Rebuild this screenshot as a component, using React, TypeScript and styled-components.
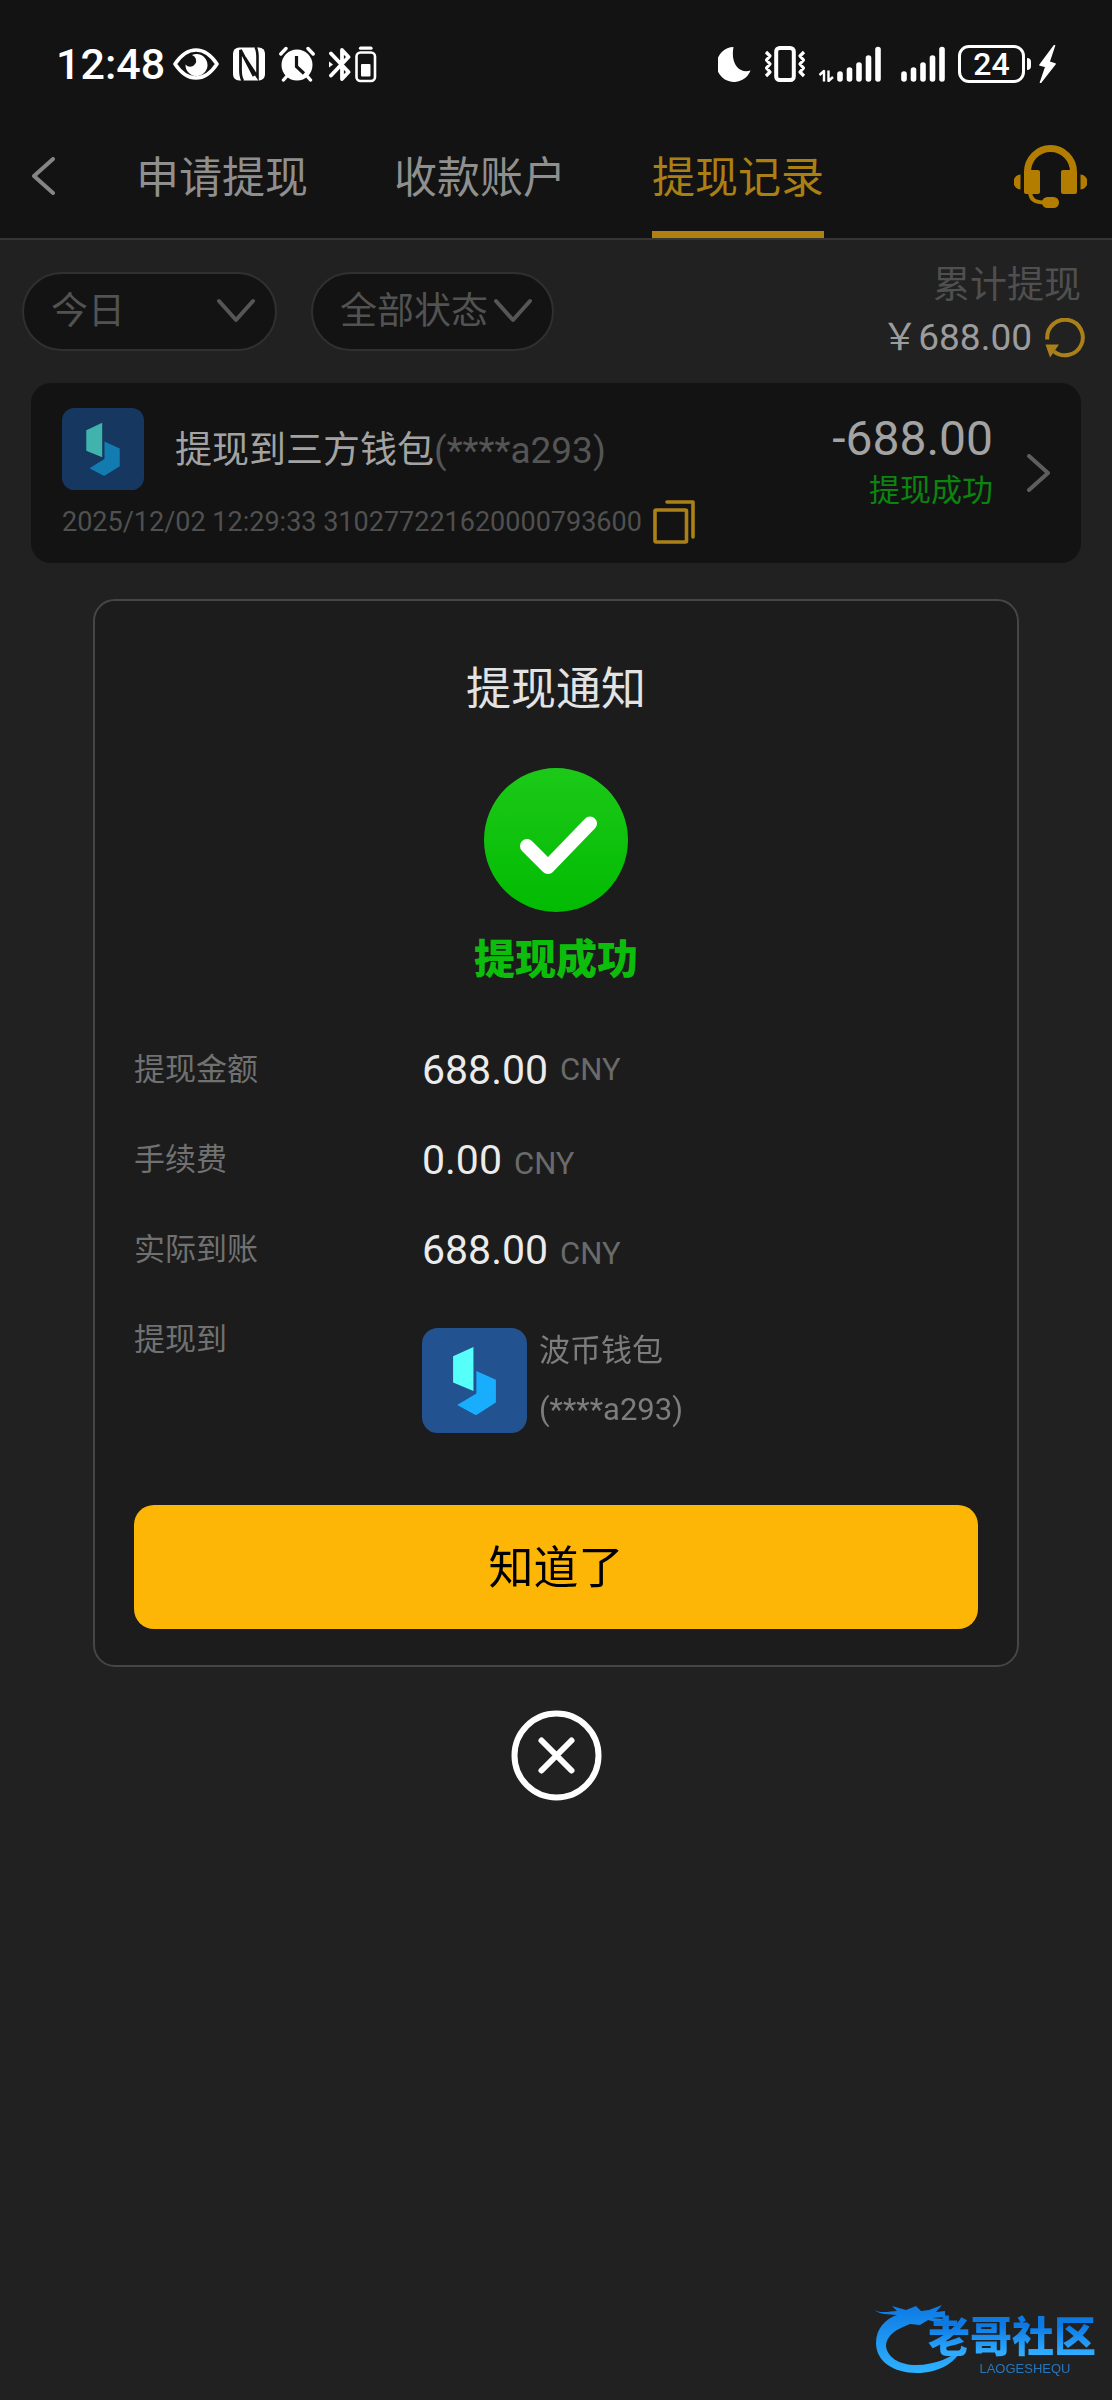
import React from "react";
import styled, { createGlobalStyle } from "styled-components";

const GlobalStyle = createGlobalStyle`
  *, *::before, *::after { box-sizing: border-box; }
  body {
    margin: 0;
    background: #212121;
    font-family: Roboto, "Noto Sans CJK SC", sans-serif;
  }
  button, select { font-family: inherit; }
  svg { display: block; flex: none; }
  h1, h2, p, dl, dd { margin: 0; font-weight: 400; }
`;

const Header = styled.header`
  background: #131313;
  border-bottom: 2px solid #353535;
`;

const StatusBar = styled.div`
  display: flex;
  align-items: center;
  justify-content: space-between;
  height: 128px;
  padding: 0 56px;
  color: #fff;
`;

const StatusGroup = styled.div<{ $gap: number }>`
  display: flex;
  align-items: center;
  gap: ${(p) => p.$gap}px;
`;

const Clock = styled.time`
  font-size: 43px;
  font-weight: 500;
  line-height: 52px;
`;

const Level = styled.span`
  display: flex;
  align-items: center;
  justify-content: center;
  width: 67px;
  height: 38px;
  border: 3px solid #fff;
  border-radius: 11px;
  font-size: 32px;
  font-weight: 500;
  line-height: 32px;
`;

const Battery = styled.span`
  display: flex;
  align-items: center;
  gap: 2px;
`;

const Nub = styled.span`
  width: 4px;
  height: 12px;
  margin-right: 6px;
  border-radius: 0 4px 4px 0;
  background: #fff;
`;

const Nav = styled.nav`
  display: flex;
  align-items: stretch;
  height: 110px;
  padding: 0 25px 0 32px;
`;

const IconButton = styled.button`
  display: flex;
  align-items: center;
  padding: 0;
  border: 0;
  background: none;
  color: inherit;
  cursor: pointer;
`;

const BackButton = styled(IconButton)`
  width: 104px;
  padding-bottom: 14px;
  color: #858585;
`;

const SupportButton = styled(IconButton)`
  margin-left: auto;
  padding-bottom: 14px;
  color: #b37d00;
`;

const Tabs = styled.div`
  display: flex;
  gap: 86px;
`;

const Tab = styled.a<{ $active?: boolean }>`
  display: flex;
  align-items: center;
  padding-bottom: 4px;
  border-bottom: 7px solid ${(p) => (p.$active ? "#b08010" : "transparent")};
  color: ${(p) => (p.$active ? "#aa7f14" : "#8f8f8f")};
  font-size: 43px;
  line-height: 60px;
  text-decoration: none;
  white-space: nowrap;
`;

const Toolbar = styled.section`
  display: flex;
  align-items: center;
  gap: 34px;
  padding: 18px 27px 19px 22px;
`;

const Filter = styled.label<{ $width: number }>`
  display: flex;
  align-items: center;
  gap: 6px;
  width: ${(p) => p.$width}px;
  height: 79px;
  padding: 0 20px 0 27px;
  border: 2px solid #303030;
  border-radius: 40px;
  background: #131313;
  color: #565656;
`;

const FilterSelect = styled.select`
  flex: 1;
  min-width: 0;
  height: 60px;
  padding: 0;
  border: 0;
  outline: 0;
  appearance: none;
  background: none;
  color: #525252;
  font-size: 37px;
`;

const Total = styled.div`
  margin-left: auto;
  padding-top: 2px;
  color: #4f4f4f;
  font-size: 37px;
  line-height: 52px;
  text-align: right;
`;

const TotalLabel = styled.p`
  padding-right: 4px;
`;

const TotalValue = styled.div`
  display: flex;
  align-items: center;
  justify-content: flex-end;
  gap: 13px;
  color: #9c9c9c;
`;

const Record = styled.article`
  display: flex;
  margin: 0 31px;
  padding: 25px 31px 19px;
  border-radius: 20px;
  background: #131313;
`;

const RecordMain = styled.div`
  display: flex;
  flex: 1;
  flex-direction: column;
  gap: 10px;
`;

const RecordHead = styled.div`
  display: flex;
  align-items: center;
  gap: 31px;
  font-size: 37px;
  line-height: 52px;
`;

const RecordTitle = styled.h2`
  padding-top: 4px;
  color: #a3a3a3;
  font-size: 37px;
`;

const Account = styled.span`
  color: #555;
`;

const RecordMeta = styled.div`
  display: flex;
  align-items: center;
  gap: 11px;
  color: #505050;
  font-size: 27px;
  line-height: 44px;
`;

const CopyButton = styled(IconButton)`
  color: #ab8018;
`;

const RecordSum = styled.div`
  padding-top: 5px;
  line-height: 52px;
  text-align: right;
`;

const Amount = styled.p`
  color: #a3a3a3;
  font-size: 48px;
`;

const State = styled.p`
  color: #0b8410;
  font-size: 31px;
`;

const OpenButton = styled(IconButton)`
  margin-left: 33px;
  padding-bottom: 6px;
  color: #5e5e5e;
`;

const Overlay = styled.div`
  position: fixed;
  inset: 0;
  display: flex;
  flex-direction: column;
  align-items: center;
  justify-content: center;
  gap: 43px;
  padding: 0 93px;
`;

const Dialog = styled.section`
  display: flex;
  flex-direction: column;
  align-items: center;
  width: 100%;
  padding: 59px 39px 36px;
  border: 2px solid #464646;
  border-radius: 22px;
  background: #1c1c1c;
`;

const DialogTitle = styled.h1`
  margin-bottom: 48px;
  color: #e3e3e3;
  font-size: 45px;
  line-height: 60px;
`;

const Result = styled.p`
  margin: 18px 0 35px;
  color: #0cbd0c;
  font-size: 41px;
  font-weight: 900;
  line-height: 60px;
`;

const Details = styled.dl`
  width: 100%;
`;

const Detail = styled.div`
  display: grid;
  grid-template-columns: 288px 1fr;
  align-items: start;
  color: #717171;
  font-size: 31px;
`;

const Term = styled.dt`
  height: 90px;
  line-height: 90px;
`;

const Value = styled.dd<{ $align: "center" | "baseline" }>`
  display: flex;
  align-items: ${(p) => p.$align};
  gap: 12px;
  height: 90px;
  line-height: 90px;
`;

const Figure = styled.span`
  color: #ebebeb;
  font-size: 41px;
`;

const Currency = styled.span`
  color: #6a6a6a;
`;

const Wallet = styled.dd`
  display: flex;
  align-items: center;
  gap: 12px;
  padding-top: 26px;
  color: #7d7d7d;
  line-height: 59px;
`;

const Confirm = styled.button`
  width: 100%;
  height: 124px;
  margin-top: 66px;
  padding: 0 0 6px;
  border: 0;
  border-radius: 20px;
  background: #fdb606;
  color: #000;
  font-size: 45px;
  cursor: pointer;
`;

const CloseButton = styled(IconButton)`
  color: #fff;
`;

const Brand = styled.div`
  position: fixed;
  right: 16px;
  bottom: 24px;
  display: flex;
  width: 222px;
  height: 72px;
`;

const BrandText = styled.div`
  position: absolute;
  right: 0;
  bottom: 0;
  display: flex;
  flex-direction: column;
  align-items: center;
`;

const BrandName = styled.span`
  background: linear-gradient(#0d7ae4 25%, #2fabff 80%);
  background-clip: text;
  color: transparent;
  font-size: 42px;
  font-weight: 900;
  line-height: 48px;
`;

const BrandLatin = styled.span`
  padding-left: 26px;
  color: #2577bd;
  font-family: "Liberation Sans", sans-serif;
  font-size: 13px;
  line-height: 14px;
`;

function Chevron({ d, width, height }: { d: string; width: number; height: number }) {
  return (
    <svg width={width} height={height} viewBox={`0 0 ${width} ${height}`} fill="none" aria-hidden="true">
      <path d={d} stroke="currentColor" strokeWidth="4" strokeLinecap="round" strokeLinejoin="round" />
    </svg>
  );
}

const DownChevron = () => <Chevron width={38} height={26} d="M2 3L19 22L36 3" />;

function WalletLogo({ size, dim }: { size: number; dim?: boolean }) {
  return (
    <svg width={size} height={size} viewBox="0 0 100 100" role="img" aria-label="波币钱包">
      <rect width="100" height="100" rx="15" fill={dim ? "#163760" : "#22528f"} />
      <path d="M29.6 27L49 18V60L29.6 52Z" fill={dim ? "#40b3ac" : "#56fffa"} />
      <path d="M51.8 41L70.4 49.4V71L51.4 83L33.5 73.4L51.8 62.3Z" fill={dim ? "#127cb0" : "#19aefd"} />
    </svg>
  );
}

function EyeIcon() {
  return (
    <svg width="46" height="34" viewBox="0 0 46 34" aria-hidden="true">
      <path d="M2 17C8 8 15 3 23 3S38 8 44 17C38 26 31 31 23 31S8 26 2 17Z" fill="none" stroke="#fff" strokeWidth="3.6" strokeLinejoin="round" />
      <path d="M19 8A11 11 0 1 1 12.500 17.500A6 6 0 1 0 19 8Z" fill="#fff" />
    </svg>
  );
}

function NfcIcon() {
  return (
    <svg width="32" height="34" viewBox="0 0 32 34" aria-hidden="true">
      <rect y="0.5" width="32" height="33" rx="6" fill="#fff" />
      <path d="M10 34C7 30 7.500 25 7.500 20V3L21 29" fill="none" stroke="#131313" strokeWidth="2.8" />
      <path d="M22.500 0C25 4 24.500 9 24.500 14V30L12 11" fill="none" stroke="#131313" strokeWidth="2.6" />
    </svg>
  );
}

function AlarmIcon() {
  return (
    <svg width="36" height="36" viewBox="0 0 36 36" aria-hidden="true">
      <circle cx="18" cy="19" r="15.500" fill="#fff" />
      <path d="M1.800 8L7 2.500M34.200 8L29 2.500M8 30L4.500 34M28 30L31.500 34" stroke="#fff" strokeWidth="3.4" strokeLinecap="round" />
      <path d="M17.500 10V20.500L25 27.500" fill="none" stroke="#131313" strokeWidth="3.2" />
    </svg>
  );
}

function BluetoothIcon() {
  return (
    <svg width="48" height="37" viewBox="0 0 48 37" fill="none" stroke="#fff" aria-hidden="true">
      <path d="M2 7.500L19.500 26L13 33V4L19.500 11L2 29.500" strokeWidth="3.8" strokeLinejoin="round" strokeLinecap="round" />
      <path d="M0 15.500L4 18.500L0 21.500Z" fill="#fff" stroke="none" />
      <rect x="27.500" y="6.500" width="18.500" height="28.500" rx="4" strokeWidth="2.6" />
      <path d="M31.500 2.200H42" strokeWidth="3.2" strokeLinecap="round" />
      <rect x="32" y="18" width="9.500" height="12.500" rx="1" fill="#fff" stroke="none" />
    </svg>
  );
}

function MoonIcon() {
  return (
    <svg width="33" height="36" viewBox="0 0 33 36" aria-hidden="true">
      <path d="M15.500 1A17.500 17.500 0 1 0 32.500 24.500C23 28 12 20 15.500 1Z" fill="#fff" />
    </svg>
  );
}

function VibrateIcon() {
  return (
    <svg width="42" height="36" viewBox="0 0 42 36" fill="none" stroke="#fff" aria-hidden="true">
      <rect x="12.200" y="2" width="17.600" height="32" rx="3.5" strokeWidth="4" />
      <path d="M2 6L6 10L2.500 14L6 18L2.500 22L6 26L2 30M40 6L36 10L39.500 14L36 18L39.500 22L36 26L40 30" strokeWidth="3.2" strokeLinejoin="round" />
    </svg>
  );
}

const bars = [
  { x: 3, y: 28 },
  { x: 12.5, y: 24 },
  { x: 22, y: 19 },
  { x: 31.5, y: 12 },
  { x: 41, y: 3.5 },
];

function SignalIcon({ data }: { data?: boolean }) {
  const shift = data ? 18 : 0;
  return (
    <svg width={44 + shift} height="36" viewBox={`0 0 ${44 + shift} 36`} fill="none" stroke="#fff" aria-hidden="true">
      {data && <path d="M0.500 29L5 25V35.500M14 31L9.500 35V24.500" strokeWidth="2.4" strokeLinejoin="round" />}
      {bars.map((b) => (
        <path key={b.x} d={`M${b.x + shift} ${b.y}V33`} strokeWidth="5.6" strokeLinecap="round" />
      ))}
    </svg>
  );
}

function BoltIcon() {
  return (
    <svg width="17" height="38" viewBox="0 0 17 38" aria-hidden="true">
      <path d="M15.500 0.500L1 20L7 21.500L1.500 37.500L16 19L10 17Z" fill="#fff" stroke="#fff" strokeWidth="1.6" strokeLinejoin="round" />
    </svg>
  );
}

function HeadsetIcon() {
  return (
    <svg width="73" height="63" viewBox="0 0 73 63" fill="none" aria-hidden="true">
      <path d="M13.500 45V27A23 23.500 0 0 1 59.500 27V45" stroke="currentColor" strokeWidth="7" />
      <rect x="10" y="25" width="16" height="24" rx="2" fill="currentColor" />
      <rect x="47" y="25" width="16" height="24" rx="2" fill="currentColor" />
      <path d="M6.500 29.500A7 7.500 0 0 0 6.500 44.500ZM66.500 29.500A7 7.500 0 0 1 66.500 44.500Z" fill="currentColor" />
      <path d="M16 48C17 55 21 57.500 31 57.500" stroke="currentColor" strokeWidth="4" />
      <rect x="28" y="52" width="17" height="11" rx="5.5" fill="currentColor" />
    </svg>
  );
}

function RefreshIcon() {
  return (
    <svg width="40" height="40" viewBox="0 0 40 40" fill="none" aria-hidden="true">
      <path d="M2.200 21.500V20A17.800 17.800 0 1 1 9 33.500" stroke="currentColor" strokeWidth="4" />
      <path d="M0.500 26.500H14L5 39.500Z" fill="currentColor" />
    </svg>
  );
}

function CopyIcon() {
  return (
    <svg width="42" height="44" viewBox="0 0 42 44" fill="none" stroke="currentColor" strokeWidth="3.6" aria-hidden="true">
      <rect x="2" y="10" width="31.500" height="32" rx="1" />
      <path d="M14 2H40V37" strokeLinecap="round" strokeLinejoin="round" />
    </svg>
  );
}

function SuccessIcon() {
  return (
    <svg width="144" height="144" viewBox="0 0 144 144" fill="none" aria-hidden="true">
      <defs>
        <linearGradient id="success" x1="0" y1="0" x2="0" y2="1">
          <stop offset="0" stopColor="#1cc918" />
          <stop offset="1" stopColor="#02bb02" />
        </linearGradient>
      </defs>
      <circle cx="72" cy="72" r="72" fill="url(#success)" />
      <path d="M43 78L64 99L106 55.500" stroke="#fff" strokeWidth="14" strokeLinecap="round" strokeLinejoin="round" />
    </svg>
  );
}

function CloseIcon() {
  return (
    <svg width="91" height="91" viewBox="0 0 91 91" fill="none" stroke="#fff" strokeWidth="6" aria-hidden="true">
      <circle cx="45.500" cy="45.500" r="42" />
      <path d="M30.500 30.500L60.500 60.500M60.500 30.500L30.500 60.500" strokeLinecap="round" />
    </svg>
  );
}

function DragonMark() {
  return (
    <svg width="92" height="72" viewBox="0 0 92 72" aria-hidden="true">
      <defs>
        <linearGradient id="dragon" x1="0" y1="0" x2="0" y2="1">
          <stop offset="0" stopColor="#0d7ae4" />
          <stop offset="1" stopColor="#2fb1ff" />
        </linearGradient>
      </defs>
      <path
        d="M0 6C9 10 16 7 23 7L18 2L32 6L42 2L47 7L55 6L68 1L62 8L71 7V13L58 14L69 15L66 19L54 16L46 21L36 20L29 23C19 27 12 34 12 42C13 53 25 61 42 61C61 61 79 53 88 44C82 59 64 69 43 69C19 69 2 57 2 39C2 25 11 15 23 11C14 10 7 11 0 6Z"
        fill="url(#dragon)"
      />
    </svg>
  );
}

const details: { term: string; amount: string; align: "center" | "baseline" }[] = [
  { term: "提现金额", amount: "688.00", align: "center" },
  { term: "手续费", amount: "0.00", align: "baseline" },
  { term: "实际到账", amount: "688.00", align: "baseline" },
];

export default function App() {
  return (
    <>
      <GlobalStyle />
      <Header>
        <StatusBar>
          <StatusGroup $gap={14}>
            <StatusGroup $gap={8}>
              <Clock>12:48</Clock>
              <EyeIcon />
            </StatusGroup>
            <NfcIcon />
            <AlarmIcon />
            <BluetoothIcon />
          </StatusGroup>
          <StatusGroup $gap={13}>
            <MoonIcon />
            <VibrateIcon />
            <StatusGroup $gap={20}>
              <SignalIcon data />
              <SignalIcon />
            </StatusGroup>
            <Battery>
              <Level>24</Level>
              <Nub />
              <BoltIcon />
            </Battery>
          </StatusGroup>
        </StatusBar>
        <Nav>
          <BackButton type="button" aria-label="返回">
            <Chevron width={24} height={38} d="M21 2L2 19L21 36" />
          </BackButton>
          <Tabs>
            <Tab href="#apply">申请提现</Tab>
            <Tab href="#accounts">收款账户</Tab>
            <Tab href="#records" $active aria-current="page">
              提现记录
            </Tab>
          </Tabs>
          <SupportButton type="button" aria-label="客服">
            <HeadsetIcon />
          </SupportButton>
        </Nav>
      </Header>

      <main>
        <Toolbar>
          <Filter $width={255}>
            <FilterSelect aria-label="日期">
              <option>今日</option>
            </FilterSelect>
            <DownChevron />
          </Filter>
          <Filter $width={243}>
            <FilterSelect aria-label="状态">
              <option>全部状态</option>
            </FilterSelect>
            <DownChevron />
          </Filter>
          <Total>
            <TotalLabel>累计提现</TotalLabel>
            <TotalValue>
              <span>￥688.00</span>
              <CopyButton type="button" aria-label="刷新">
                <RefreshIcon />
              </CopyButton>
            </TotalValue>
          </Total>
        </Toolbar>

        <Record>
          <RecordMain>
            <RecordHead>
              <WalletLogo size={82} dim />
              <RecordTitle>
                提现到三方钱包<Account>(****a293)</Account>
              </RecordTitle>
            </RecordHead>
            <RecordMeta>
              <span>2025/12/02 12:29:33 310277221620000793600</span>
              <CopyButton type="button" aria-label="复制">
                <CopyIcon />
              </CopyButton>
            </RecordMeta>
          </RecordMain>
          <RecordSum>
            <Amount>-688.00</Amount>
            <State>提现成功</State>
          </RecordSum>
          <OpenButton type="button" aria-label="查看详情">
            <Chevron width={24} height={38} d="M3 2L22 19L3 36" />
          </OpenButton>
        </Record>
      </main>

      <Overlay>
        <Dialog role="dialog" aria-labelledby="notice-title">
          <DialogTitle id="notice-title">提现通知</DialogTitle>
          <SuccessIcon />
          <Result>提现成功</Result>
          <Details>
            {details.map((d) => (
              <Detail key={d.term}>
                <Term>{d.term}</Term>
                <Value $align={d.align}>
                  <Figure>{d.amount}</Figure>
                  <Currency>CNY</Currency>
                </Value>
              </Detail>
            ))}
            <Detail>
              <Term>提现到</Term>
              <Wallet>
                <WalletLogo size={105} />
                <div>
                  <p>波币钱包</p>
                  <p>(****a293)</p>
                </div>
              </Wallet>
            </Detail>
          </Details>
          <Confirm type="button">知道了</Confirm>
        </Dialog>
        <CloseButton type="button" aria-label="关闭">
          <CloseIcon />
        </CloseButton>
      </Overlay>

      <Brand>
        <DragonMark />
        <BrandText>
          <BrandName>老哥社区</BrandName>
          <BrandLatin>LAOGESHEQU</BrandLatin>
        </BrandText>
      </Brand>
    </>
  );
}
